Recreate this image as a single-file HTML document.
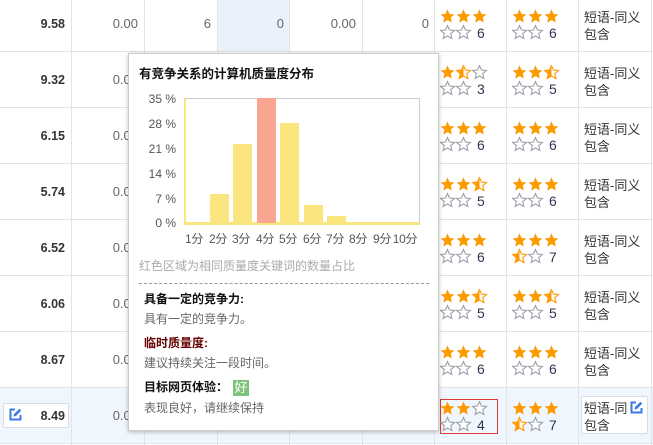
<!DOCTYPE html>
<html><head><meta charset="utf-8"><style>
*{margin:0;padding:0;box-sizing:border-box}
body{width:653px;height:445px;overflow:hidden;background:#fff;position:relative;font-family:"Liberation Sans","Noto Sans CJK SC",sans-serif;font-size:12px;color:#666}
.a{position:absolute}
.vl{position:absolute;top:0;height:445px;width:1px;background:#e4e4e4}
.hl{position:absolute;left:0;width:653px;height:1px;background:#e4e4e4}
.n{position:absolute;text-align:right;font-size:13px;color:#666;line-height:14px}
.b{font-weight:bold;color:#333;font-size:12.5px}
.st{position:absolute;width:62px;height:32px}
.c8{position:absolute;left:584px;font-size:13px;line-height:17px;color:#333}
.tt{position:absolute;left:128px;top:53px;width:311px;height:378px;background:#fff;border:1px solid #ccc;box-shadow:0 1px 4px rgba(0,0,0,.25)}
.yl{position:absolute;width:40px;text-align:right;font-size:12px;color:#555;line-height:12px}
.xl{position:absolute;top:233px;font-size:12px;color:#555;width:30px;margin-left:-3px;text-align:center;line-height:12px;white-space:nowrap;letter-spacing:-0.3px}
.bar{position:absolute;width:19px;background:#fae47e}
.h{position:absolute;left:144px;font-size:12px;font-weight:bold;color:#111}
.p{position:absolute;left:144px;font-size:12px;color:#666}
</style></head><body>
<svg width="0" height="0" style="position:absolute"><defs>
<path id="s" d="M7.5 .5L9.5 5 14.4 5.4 10.7 8.6 11.8 13.5 7.5 11 3.2 13.5 4.3 8.6 .6 5.4 5.5 5Z"/>
<clipPath id="hc"><rect x="0" y="0" width="7.5" height="15"/></clipPath>
<g id="F"><use href="#s" fill="#ff9900"/></g>
<g id="E"><use href="#s" fill="#fff" stroke="#9aa0a8" stroke-width="1.1"/></g>
<g id="H"><use href="#s" fill="#fff" stroke="#ff9900" stroke-width="1.1"/><use href="#s" fill="#ff9900" clip-path="url(#hc)"/></g>
</defs></svg>
<div class="a" style="left:217px;top:0;width:72px;height:52px;background:#eaf1fb"></div>
<div class="a" style="left:0;top:388px;width:653px;height:56px;background:#f0f6fd"></div>
<div class="vl" style="left:71px"></div><div class="vl" style="left:144px"></div><div class="vl" style="left:217px"></div><div class="vl" style="left:289px"></div><div class="vl" style="left:362px"></div><div class="vl" style="left:434px"></div><div class="vl" style="left:506px"></div><div class="vl" style="left:578px"></div><div class="vl" style="left:651px"></div>
<div class="hl" style="top:51px"></div><div class="hl" style="top:107px"></div><div class="hl" style="top:163px"></div><div class="hl" style="top:219px"></div><div class="hl" style="top:275px"></div><div class="hl" style="top:331px"></div><div class="hl" style="top:387px"></div><div class="hl" style="top:443px"></div>

<div class="n b" style="left:0;width:65px;top:17px">9.58</div>
<div class="n b" style="left:0;width:65px;top:73px">9.32</div>
<div class="n b" style="left:0;width:65px;top:129px">6.15</div>
<div class="n b" style="left:0;width:65px;top:185px">5.74</div>
<div class="n b" style="left:0;width:65px;top:241px">6.52</div>
<div class="n b" style="left:0;width:65px;top:297px">6.06</div>
<div class="n b" style="left:0;width:65px;top:353px">8.67</div>
<div class="a" style="left:3px;top:403px;width:66px;height:25px;border:1px solid #d8dde3;background:#fff;border-radius:2px"></div>
<svg class="a" style="left:9px;top:408px" width="13" height="13" viewBox="0 0 13 13"><path d="M6 1.5H1.5V11.5H11.5V7" fill="none" stroke="#3a7be6" stroke-width="2"/><path d="M4.5 8.5L5 6 10.5 .8 12.2 2.5 7 8Z" fill="#3a7be6"/></svg>
<div class="n b" style="left:0;width:65px;top:409px">8.49</div>

<div class="n" style="left:72px;width:66px;top:17px">0.00</div>
<div class="n" style="left:145px;width:66px;top:17px">6</div>
<div class="n" style="left:218px;width:66px;top:17px">0</div>
<div class="n" style="left:290px;width:66px;top:17px">0.00</div>
<div class="n" style="left:363px;width:66px;top:17px">0</div>
<div class="n" style="left:72px;width:66px;top:73px">0.00</div>
<div class="n" style="left:72px;width:66px;top:129px">0.00</div>
<div class="n" style="left:72px;width:66px;top:185px">0.00</div>
<div class="n" style="left:72px;width:66px;top:241px">0.00</div>
<div class="n" style="left:72px;width:66px;top:297px">0.00</div>
<div class="n" style="left:72px;width:66px;top:353px">0.00</div>
<div class="n" style="left:72px;width:66px;top:409px">0.00</div>

<svg class="st" style="left:440px;top:9px"><use href="#F"/><use href="#F" x="16"/><use href="#F" x="32"/><use href="#E" y="16"/><use href="#E" x="16" y="16"/><text x="37" y="29" font-size="14" fill="#335" font-family="Liberation Sans">6</text></svg>
<svg class="st" style="left:512px;top:9px"><use href="#F"/><use href="#F" x="16"/><use href="#F" x="32"/><use href="#E" y="16"/><use href="#E" x="16" y="16"/><text x="37" y="29" font-size="14" fill="#335" font-family="Liberation Sans">6</text></svg>
<svg class="st" style="left:440px;top:65px"><use href="#F"/><use href="#H" x="16"/><use href="#E" x="32"/><use href="#E" y="16"/><use href="#E" x="16" y="16"/><text x="37" y="29" font-size="14" fill="#335" font-family="Liberation Sans">3</text></svg>
<svg class="st" style="left:512px;top:65px"><use href="#F"/><use href="#F" x="16"/><use href="#H" x="32"/><use href="#E" y="16"/><use href="#E" x="16" y="16"/><text x="37" y="29" font-size="14" fill="#335" font-family="Liberation Sans">5</text></svg>
<svg class="st" style="left:440px;top:121px"><use href="#F"/><use href="#F" x="16"/><use href="#F" x="32"/><use href="#E" y="16"/><use href="#E" x="16" y="16"/><text x="37" y="29" font-size="14" fill="#335" font-family="Liberation Sans">6</text></svg>
<svg class="st" style="left:512px;top:121px"><use href="#F"/><use href="#F" x="16"/><use href="#F" x="32"/><use href="#E" y="16"/><use href="#E" x="16" y="16"/><text x="37" y="29" font-size="14" fill="#335" font-family="Liberation Sans">6</text></svg>
<svg class="st" style="left:440px;top:177px"><use href="#F"/><use href="#F" x="16"/><use href="#H" x="32"/><use href="#E" y="16"/><use href="#E" x="16" y="16"/><text x="37" y="29" font-size="14" fill="#335" font-family="Liberation Sans">5</text></svg>
<svg class="st" style="left:512px;top:177px"><use href="#F"/><use href="#F" x="16"/><use href="#F" x="32"/><use href="#E" y="16"/><use href="#E" x="16" y="16"/><text x="37" y="29" font-size="14" fill="#335" font-family="Liberation Sans">6</text></svg>
<svg class="st" style="left:440px;top:233px"><use href="#F"/><use href="#F" x="16"/><use href="#F" x="32"/><use href="#E" y="16"/><use href="#E" x="16" y="16"/><text x="37" y="29" font-size="14" fill="#335" font-family="Liberation Sans">6</text></svg>
<svg class="st" style="left:512px;top:233px"><use href="#F"/><use href="#F" x="16"/><use href="#F" x="32"/><use href="#H" y="16"/><use href="#E" x="16" y="16"/><text x="37" y="29" font-size="14" fill="#335" font-family="Liberation Sans">7</text></svg>
<svg class="st" style="left:440px;top:289px"><use href="#F"/><use href="#F" x="16"/><use href="#H" x="32"/><use href="#E" y="16"/><use href="#E" x="16" y="16"/><text x="37" y="29" font-size="14" fill="#335" font-family="Liberation Sans">5</text></svg>
<svg class="st" style="left:512px;top:289px"><use href="#F"/><use href="#F" x="16"/><use href="#H" x="32"/><use href="#E" y="16"/><use href="#E" x="16" y="16"/><text x="37" y="29" font-size="14" fill="#335" font-family="Liberation Sans">5</text></svg>
<svg class="st" style="left:440px;top:345px"><use href="#F"/><use href="#F" x="16"/><use href="#F" x="32"/><use href="#E" y="16"/><use href="#E" x="16" y="16"/><text x="37" y="29" font-size="14" fill="#335" font-family="Liberation Sans">6</text></svg>
<svg class="st" style="left:512px;top:345px"><use href="#F"/><use href="#F" x="16"/><use href="#F" x="32"/><use href="#E" y="16"/><use href="#E" x="16" y="16"/><text x="37" y="29" font-size="14" fill="#335" font-family="Liberation Sans">6</text></svg>
<div class="a" style="left:440px;top:399px;width:58px;height:35px;border:1px solid #e53935"></div>
<svg class="st" style="left:440px;top:401px"><use href="#F"/><use href="#F" x="16"/><use href="#E" x="32"/><use href="#E" y="16"/><use href="#E" x="16" y="16"/><text x="37" y="29" font-size="14" fill="#335" font-family="Liberation Sans">4</text></svg>
<svg class="st" style="left:512px;top:401px"><use href="#F"/><use href="#F" x="16"/><use href="#F" x="32"/><use href="#H" y="16"/><use href="#E" x="16" y="16"/><text x="37" y="29" font-size="14" fill="#335" font-family="Liberation Sans">7</text></svg>

<div class="c8" style="top:9px">短语-同义<br>包含</div>
<div class="c8" style="top:65px">短语-同义<br>包含</div>
<div class="c8" style="top:121px">短语-同义<br>包含</div>
<div class="c8" style="top:177px">短语-同义<br>包含</div>
<div class="c8" style="top:233px">短语-同义<br>包含</div>
<div class="c8" style="top:289px">短语-同义<br>包含</div>
<div class="c8" style="top:345px">短语-同义<br>包含</div>
<div class="a" style="left:581px;top:396px;width:67px;height:38px;border:1px solid #d8dde3;background:#fff;border-radius:2px;overflow:hidden"><div style="position:absolute;left:2px;top:3px;font-size:13px;line-height:17px;color:#333;white-space:nowrap">短语-同义<br>包含</div><div style="position:absolute;left:46px;top:3px;width:19px;height:16px;background:#fff"></div></div>
<svg class="a" style="left:630px;top:401px" width="13" height="13" viewBox="0 0 13 13"><path d="M6 1.5H1.5V11.5H11.5V7" fill="none" stroke="#3a7be6" stroke-width="2"/><path d="M4.5 8.5L5 6 10.5 .8 12.2 2.5 7 8Z" fill="#3a7be6"/></svg>

<div class="tt"></div>
<div class="a" style="left:139px;top:63px;font-size:12.5px;font-weight:bold;color:#111">有竞争关系的计算机质量度分布</div>
<div class="a" style="left:184px;top:98px;width:236px;height:127px;border:1px solid #ccc;border-left:2px solid #fae47e;border-bottom:3px solid #fae47e"></div>
<div class="yl" style="left:136px;top:93px">35 %</div>
<div class="yl" style="left:136px;top:118px">28 %</div>
<div class="yl" style="left:136px;top:143px">21 %</div>
<div class="yl" style="left:136px;top:168px">14 %</div>
<div class="yl" style="left:136px;top:193px">7 %</div>
<div class="yl" style="left:136px;top:217px">0 %</div>
<div class="bar" style="left:210px;top:194px;height:29px"></div>
<div class="bar" style="left:233px;top:144px;height:79px"></div>
<div class="bar" style="left:257px;top:98px;height:125px;background:#f9a592"></div>
<div class="bar" style="left:280px;top:123px;height:100px"></div>
<div class="bar" style="left:304px;top:205px;height:18px"></div>
<div class="bar" style="left:327px;top:216px;height:7px"></div>
<div class="xl" style="left:182px">1分</div><div class="xl" style="left:206px">2分</div><div class="xl" style="left:229px">3分</div><div class="xl" style="left:253px">4分</div><div class="xl" style="left:276px">5分</div><div class="xl" style="left:300px">6分</div><div class="xl" style="left:323px">7分</div><div class="xl" style="left:346px">8分</div><div class="xl" style="left:370px">9分</div><div class="xl" style="left:393px">10分</div>
<div class="a" style="left:139px;top:257px;font-size:12px;color:#aaa">红色区域为相同质量度关键词的数量占比</div>
<div class="a" style="left:139px;top:283px;width:290px;border-top:1px dashed #999"></div>
<div class="h" style="top:290px">具备一定的竞争力:</div>
<div class="p" style="top:310px">具有一定的竞争力。</div>
<div class="h" style="top:334px;color:#600">临时质量度:</div>
<div class="p" style="top:354px">建议持续关注一段时间。</div>
<div class="h" style="top:378px">目标网页体验：</div>
<div class="a" style="left:233px;top:380px;width:16px;height:16px;background:#7cc47a;color:#fff;font-size:13px;line-height:16px;text-align:center">好</div>
<div class="p" style="top:399px">表现良好，请继续保持</div>
</body></html>
